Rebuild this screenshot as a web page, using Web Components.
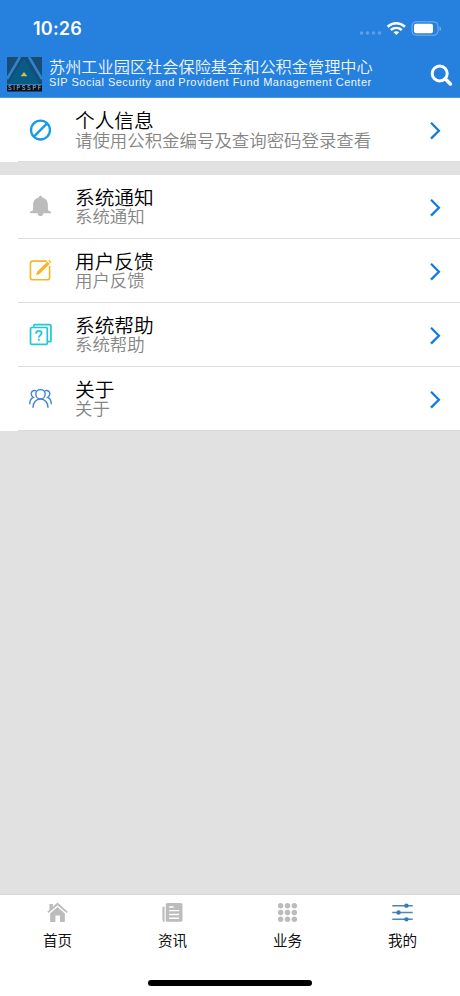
<!DOCTYPE html>
<html lang="zh-CN">
<head>
<meta charset="utf-8">
<title>我的</title>
<style>
html,body{margin:0;height:100%}
body{font-family:"Liberation Sans","Noto Sans CJK SC",sans-serif;background:#e1e1e1;overflow:hidden}
</style>
</head>
<body>
<app-screen>
  <status-bar slot="top" time="10:26"></status-bar>
  <app-header slot="top">
    <span slot="title">苏州工业园区社会保险基金和公积金管理中心</span>
    <span slot="subtitle">SIP Social Security and Provident Fund Management Center</span>
  </app-header>
  <list-group>
    <list-row icon="ban"><span slot="title">个人信息</span><span slot="detail">请使用公积金编号及查询密码登录查看</span></list-row>
  </list-group>
  <list-group>
    <list-row icon="bell"><span slot="title">系统通知</span><span slot="detail">系统通知</span></list-row>
    <list-row icon="edit"><span slot="title">用户反馈</span><span slot="detail">用户反馈</span></list-row>
    <list-row icon="help"><span slot="title">系统帮助</span><span slot="detail">系统帮助</span></list-row>
    <list-row icon="people"><span slot="title">关于</span><span slot="detail">关于</span></list-row>
  </list-group>
  <tab-bar slot="bottom">
    <tab-item icon="home">首页</tab-item>
    <tab-item icon="news">资讯</tab-item>
    <tab-item icon="grid">业务</tab-item>
    <tab-item icon="sliders">我的</tab-item>
  </tab-bar>
</app-screen>
<script>
const ICONS = {
  ban: `<g fill="none" stroke="#159de2" stroke-width="2.4"><circle cx="12" cy="11.500" r="9.900"/><path d="M5.1 18.400 18.900 4.600"/></g>`,
  bell: `<path fill="#bcbcbc" d="M12 .9c1 0 1.700.7 1.700 1.700 3.900.8 6 3.800 6 7.500v4.800c0 1.200 1.100 2 3.300 2.500v1.600h-8c-.4 2-1.400 3-3 3s-2.600-1-3-3H1v-1.600c2.200-.5 3.300-1.300 3.300-2.500v-4.800c0-3.700 2.100-6.700 6-7.500 0-1 .7-1.700 1.700-1.700z"/>`,
  edit: `<g fill="none" stroke="#f8b526" stroke-width="1.700"><path d="M18.500 2.200H4a2.500 2.500 0 0 0-2.500 2.500v14.500A2.500 2.500 0 0 0 4 21.700h15a2.500 2.500 0 0 0 2.500-2.500V7"/></g><path fill="#f8b526" d="m7.200 16.900 1.300-3.600L19.300 2.500l2.400 2.400L10.900 15.700zM20 1.800l1-1 2.400 2.400-1 1z"/>`,
  help: `<g fill="none" stroke="#1fc8da" stroke-width="1.800"><rect x="1.600" y="4.700" width="17.500" height="17.500" rx="1.200"/><path d="M5 4V2.900c0-.7.400-1.100 1.100-1.100h15.600c.7 0 1.200.5 1.200 1.200v15.400c0 .7-.4 1.100-1.100 1.100h-2"/><path stroke-width="1.900" d="M7.500 11.200c0-1.900 1.100-2.900 2.800-2.900s2.800 1 2.800 2.500c0 2-2.800 2-2.800 4.400M10.300 16.500v1.900"/></g>`,
  people: `<g fill="none" stroke="#4685d7" stroke-width="1.500" stroke-linecap="round"><circle cx="12" cy="7.500" r="4.900"/><path d="M4.200 21.200c0-4.700 3-8.600 7.800-8.600s7.800 3.900 7.800 8.600M7 3.800c-3-.9-4.700 1-4.700 3.300 0 1.800.9 3.100 2.200 3.800-2.200 1-3.700 3.200-3.700 6.600M17 3.800c3-.9 4.700 1 4.700 3.300 0 1.800-.9 3.100-2.200 3.800 2.200 1 3.700 3.200 3.700 6.600"/></g>`,
  home: `<path fill="#bcbcbc" d="M3.600 13.200 12 5.600l8.400 7.600v9.700h-5.600v-7.400H9.600v7.400h-6zM12 .6l11.700 10.500-1.300 1.600L12 3.600 1.600 12.700.3 11.100l2.500-2.300V2.200h3.900v3.200z"/>`,
  news: `<path fill="#bcbcbc" d="M.5 5.500h2.400v14.800c0 1.200.5 2 1.200 2.300H3c-1.600 0-2.500-.9-2.500-2.400z"/><path fill="#bcbcbc" fill-rule="evenodd" d="M6.500 1h14.700c1.400 0 2.200.8 2.200 2.200v17.300c0 1.400-.8 2.200-2.200 2.200H6.500c-1.400 0-2.200-.8-2.200-2.200V3.200C4.300 1.800 5.100 1 6.500 1zm1.600 3.800v1.800h5.300V4.800zm0 4.300v1.600h11.500V9.100zm0 4.300V15h11.500v-1.600zm0 4.300v1.600h11.500v-1.600z"/>`,
  grid: `<g fill="#bcbcbc">${[4.2,12,19.8].map(y=>[4.2,12,19.8].map(x=>`<circle cx="${x}" cy="${y}" r="3.100"/>`).join('')).join('')}</g>`,
  sliders: `<g stroke="#4b86bd" stroke-width="1.800" fill="#347bb9"><path d="M.3 4.200h23.400M.3 12h23.400M.3 19.800h23.400"/><g stroke="none"><circle cx="16.500" cy="4.200" r="2.500"/><circle cx="7.500" cy="12" r="2.500"/><circle cx="16.500" cy="19.800" r="2.500"/></g></g>`
};
function define(name, html){
  customElements.define(name, class extends HTMLElement{
    constructor(){
      super();
      this.attachShadow({mode:'open'}).innerHTML = typeof html === 'function' ? html(this) : html;
    }
  });
}
define('ui-icon', el => `<style>:host{display:block;line-height:0}svg{width:100%;height:100%}</style><svg viewBox="0 0 24 24">${ICONS[el.getAttribute('name')]}</svg>`);
define('app-screen', `<style>
:host{display:flex;flex-direction:column;height:996px;width:460px}
main{flex:1;display:flex;flex-direction:column;gap:12.500px;background:#e1e1e1}
</style><slot name="top"></slot><main><slot></slot></main><slot name="bottom"></slot>`);
define('status-bar', el => `<style>
:host{display:flex;height:50px;box-sizing:border-box;padding:8px 18px 0 33px;background:#2680de;color:#fff;align-items:center;justify-content:space-between}
b{font:600 18px/22px "Inter",sans-serif;letter-spacing:.2px}
svg{display:block}
</style><b>${el.getAttribute('time')}</b>
<svg width="83" height="18" viewBox="0 0 83 18" fill="#fff">
<g fill="#5f9fe6"><circle cx="2.500" cy="13" r="1.800"/><circle cx="8.500" cy="13" r="1.800"/><circle cx="14.500" cy="13" r="1.800"/><circle cx="20.500" cy="13" r="1.800"/></g>
<g fill="none" stroke="#fff" stroke-width="2.600"><path d="M28.600 6.700c5-4.700 12.400-4.700 17.400 0M31.800 10c3.300-2.700 7.700-2.700 11 0"/></g><path d="M34.400 12.100c1.700-1.300 4.100-1.300 5.800 0L37.300 15z"/>
<rect x="53" y="1.800" width="26" height="13.400" rx="3.900" fill="none" stroke="#7db2ec" stroke-width="1"/><rect x="55" y="3.800" width="19" height="9.400" rx="2"/><path fill="#7db2ec" d="M80.500 6.500c2 .7 2 3.900 0 4.600z"/>
</svg>`);
define('app-header', `<style>
:host{display:flex;height:48px;box-sizing:border-box;padding:0 7px;background:#2680de;color:#eef7ff;align-items:flex-start;border-bottom:1px solid #4f98e5}
.logo{margin-top:7px;display:block;flex:none}
.t{flex:1;margin:8px 0 0 7px;white-space:nowrap}
.a{font-size:16.200px;line-height:18px;font-weight:350}
.b{font-size:11px;line-height:13px;letter-spacing:.48px}
.s{margin-top:13px;flex:none}
</style>
<svg class="logo" width="35" height="35" viewBox="0 0 35 35"><path fill="#164c76" d="M0 0h35v27H0z"/><path fill="#075b87" d="M17 1 33 27H1z"/><path fill="none" stroke="#2f84cc" stroke-width="2.600" d="M0 22 13 0M35 22 22 0"/><path fill="#e8bd2d" d="m17 15 3.300 4.300h-6.600z"/><path fill="#091019" d="M0 28h35v6.500H0z"/><text x="1" y="33.300" textLength="33" lengthAdjust="spacing" font-family="Inter" font-size="5.600" font-weight="500" fill="#b2bac2">SIPSSPF</text></svg>
<div class="t"><div class="a"><slot name="title"></slot></div><div class="b"><slot name="subtitle"></slot></div></div>
<svg class="s" width="24" height="24" viewBox="0 0 24 24" fill="none" stroke="#fff" stroke-width="3"><circle cx="10.700" cy="10.500" r="7.500"/><path d="m16.200 15.700 5.200 5.200" stroke-width="3.600" stroke-linecap="round"/></svg>`);
define('list-group', `<style>:host{display:block;background:#fff}</style><slot></slot>`);
define('list-row', el => `<style>
:host{display:flex;height:64.100px;position:relative;box-sizing:border-box;padding:0 19px 0 29px}
:host::after{content:"";position:absolute;left:18px;right:0;bottom:0;height:1px;background:#dcdcdc}
ui-icon{width:23px;height:23px;margin-top:20.500px}
.t{flex:1;margin:13px 0 0 23px;white-space:nowrap}
.a{font-size:19.700px;line-height:20px;color:#000;font-weight:350}
.b{font-size:17.430px;line-height:19px;padding-top:.6px;color:#858585;font-weight:350}
.c{margin-top:24px}
</style><ui-icon name="${el.getAttribute('icon')}"></ui-icon>
<div class="t"><div class="a"><slot name="title"></slot></div><div class="b"><slot name="detail"></slot></div></div>
<svg class="c" width="12" height="18" viewBox="0 0 12 18" fill="none" stroke="#167bd8" stroke-width="2.300"><path d="M2 .8 9.900 8.700 2 16.600"/></svg>`);
define('tab-bar', `<style>:host{display:flex;height:102px;box-sizing:border-box;background:#fff;position:relative;border-top:1px solid #d8d8d8}
i{position:absolute;left:148px;bottom:10px;width:164px;height:6px;border-radius:3px;background:#000}</style><slot></slot><i></i>`);
define('tab-item', el => `<style>:host{display:flex;flex:1;flex-direction:column;align-items:center;font-size:14.600px;line-height:20px;color:#111}
ui-icon{width:21px;height:21px;margin:7px 0 8px}</style><ui-icon name="${el.getAttribute('icon')}"></ui-icon><span><slot></slot></span>`);
</script>
</body>
</html>
